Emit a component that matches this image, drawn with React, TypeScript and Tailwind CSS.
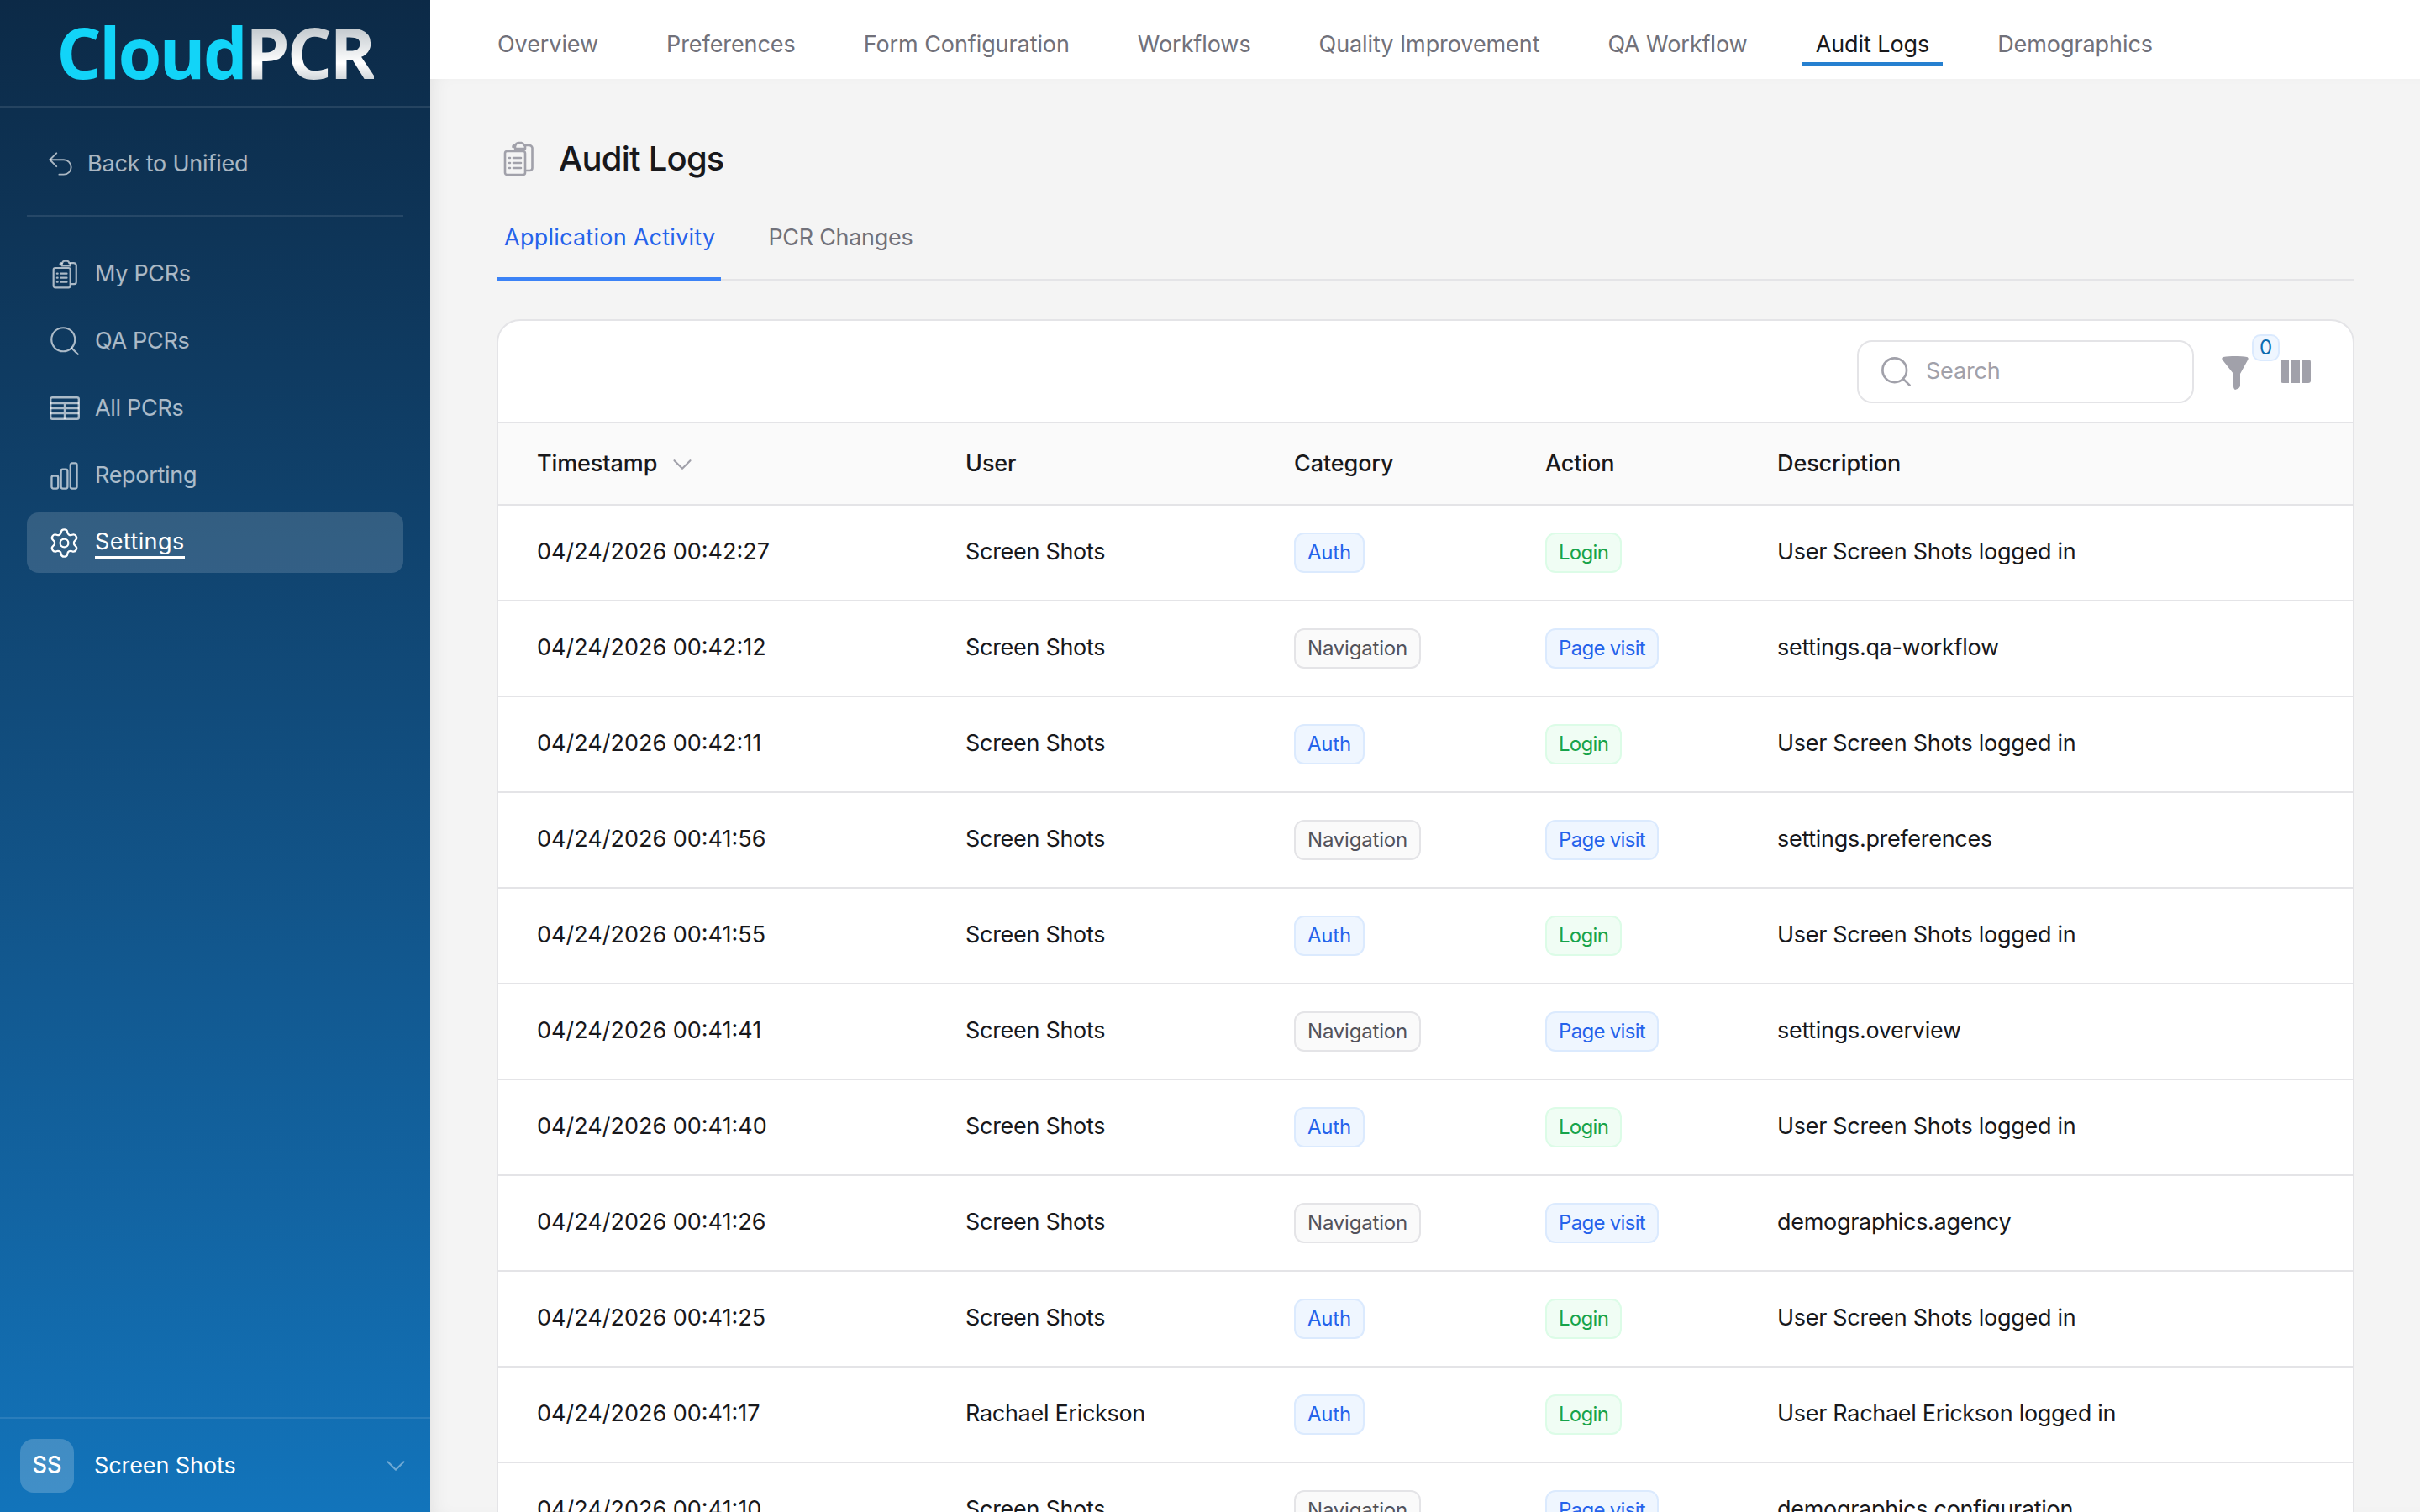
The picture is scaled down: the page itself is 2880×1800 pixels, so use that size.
import React from "react";
import { ChevronDown, Search, Undo2, Settings } from "lucide-react";

type BadgeKind = "blue" | "green" | "gray";
const badgeCls: Record<BadgeKind, string> = {
  blue: "bg-[#eff6ff] border-[#dbeafe] text-[#2563eb]",
  green: "bg-[#f0fdf4] border-[#dcfce7] text-[#16a34a]",
  gray: "bg-[#fafafa] border-[#e4e4e7] text-[#52525b]",
};

function Badge({ kind, tight, children }: { kind: BadgeKind; tight?: boolean; children: React.ReactNode }) {
  return (
    <span className={`inline-flex h-[48px] items-center rounded-[12px] border-2 px-[14px] text-[24px] ${tight ? "tracking-[-0.7px]" : "tracking-[-0.2px]"} ${badgeCls[kind]}`}>
      {children}
    </span>
  );
}

function ClipIcon({ className }: { className?: string }) {
  return (
    <svg viewBox="0 0 36 42" fill="none" stroke="currentColor" strokeWidth="2.6" strokeLinecap="round" strokeLinejoin="round" className={className}>
      <path d="M12 7h-0.5a2 2 0 0 1 2-2h1a4 4 0 0 1 3-3h4a4 4 0 0 1 3 3h6a4 4 0 0 1 4 3v24a3 3 0 0 1-3 3h-4" />
      <path d="M14 6v3h12V6" />
      <rect x="2" y="12" width="24" height="28" rx="2.5" />
      <path d="M7 20h1M12 20h9M7 26h1M12 26h9M7 32h1M12 32h9" />
    </svg>
  );
}

function TableIcon({ className }: { className?: string }) {
  return (
    <svg viewBox="0 0 36 28" fill="none" stroke="currentColor" strokeWidth="2.4" strokeLinejoin="round" className={className}>
      <rect x="1.2" y="1.2" width="33.6" height="25.6" rx="2" />
      <path d="M1 8h34M1 14h34M1 20h34M18 8v19" />
    </svg>
  );
}

function BarsIcon({ className }: { className?: string }) {
  return (
    <svg viewBox="0 0 34 34" fill="none" stroke="currentColor" strokeWidth="2.4" strokeLinejoin="round" className={className}>
      <rect x="1.5" y="17" width="8" height="15.5" rx="2" />
      <rect x="13" y="9" width="8" height="23.5" rx="2" />
      <rect x="24.5" y="1.5" width="8" height="31" rx="2" />
    </svg>
  );
}

const navItems: { label: string; icon: React.ReactNode; active?: boolean }[] = [
  { label: "My PCRs", icon: <ClipIcon className="h-[35px] w-[30px]" /> },
  { label: "QA PCRs", icon: <Search className="h-[42px] w-[42px]" strokeWidth={1.25} /> },
  { label: "All PCRs", icon: <TableIcon className="h-[28px] w-[36px]" /> },
  { label: "Reporting", icon: <BarsIcon className="h-[33px] w-[33px]" /> },
  { label: "Settings", icon: <Settings className="h-[39px] w-[39px]" strokeWidth={1.4} />, active: true },
];

const topTabs = ["Overview", "Preferences", "Form Configuration", "Workflows", "Quality Improvement", "QA Workflow", "Audit Logs", "Demographics"];

type Row = [string, string, "Auth" | "Navigation", string];
const rows: Row[] = [
  ["04/24/2026 00:42:27", "Screen Shots", "Auth", "User Screen Shots logged in"],
  ["04/24/2026 00:42:12", "Screen Shots", "Navigation", "settings.qa-workflow"],
  ["04/24/2026 00:42:11", "Screen Shots", "Auth", "User Screen Shots logged in"],
  ["04/24/2026 00:41:56", "Screen Shots", "Navigation", "settings.preferences"],
  ["04/24/2026 00:41:55", "Screen Shots", "Auth", "User Screen Shots logged in"],
  ["04/24/2026 00:41:41", "Screen Shots", "Navigation", "settings.overview"],
  ["04/24/2026 00:41:40", "Screen Shots", "Auth", "User Screen Shots logged in"],
  ["04/24/2026 00:41:26", "Screen Shots", "Navigation", "demographics.agency"],
  ["04/24/2026 00:41:25", "Screen Shots", "Auth", "User Screen Shots logged in"],
  ["04/24/2026 00:41:17", "Rachael Erickson", "Auth", "User Rachael Erickson logged in"],
  ["04/24/2026 00:41:10", "Screen Shots", "Navigation", "demographics.configuration"],
];

export default function App() {
  return (
    <div className="flex h-screen overflow-hidden bg-white text-[#18181b] font-['Inter','Liberation_Sans',sans-serif]">
      <aside className="flex w-[512px] shrink-0 flex-col bg-gradient-to-b from-[#0c2a47] to-[#1274bb]">
        <div className="flex h-[128px] items-center justify-center border-b-2 border-white/10 pb-[2px]">
          <span className="font-['Open_Sans',sans-serif] text-[84px] font-bold leading-none tracking-[-3px] text-[#12d4f8]">
            Cloud
            <span className="bg-gradient-to-b from-[#9aa5ad] via-white via-[62%] to-[#9aa5ad] bg-clip-text text-transparent">PCR</span>
          </span>
        </div>
        <div className="mx-[32px] border-b-2 border-white/10">
          <div className="flex h-[128px] items-center gap-[13px] pl-[21px] pt-[6px] text-[27px] tracking-[-0.2px] text-white/65">
            <Undo2 className="h-[38px] w-[38px]" strokeWidth={1.2} />
            Back to Unified
          </div>
        </div>
        <nav className="mx-[32px] mt-[32px] flex flex-col gap-[8px]">
          {navItems.map((it) => (
            <div
              key={it.label}
              className={`flex h-[72px] items-center rounded-[14px] text-[27px] ${it.active ? "bg-white/15 tracking-[0.4px] text-white" : "tracking-[-0.3px] text-white/65"}`}
            >
              <span className="flex w-[81px] shrink-0 justify-center pl-[8px]">{it.icon}</span>
              <span className={it.active ? "border-b-4 border-white leading-[35px]" : ""}>{it.label}</span>
            </div>
          ))}
        </nav>
        <div className="mt-auto flex h-[113px] items-center border-t-2 border-white/10 pl-[24px] pr-[22px] text-white">
          <span className="flex h-[64px] w-[64px] items-center justify-center rounded-[16px] bg-white/20 text-[27px] font-medium">SS</span>
          <span className="ml-[24px] pt-[2px] text-[27px] tracking-[-0.1px]">Screen Shots</span>
          <ChevronDown className="ml-auto h-[38px] w-[38px] text-white/40" strokeWidth={1.3} />
        </div>
      </aside>

      <div className="flex min-w-0 flex-1 flex-col">
        <header className="flex h-[94px] shrink-0 items-start gap-[49px] bg-white pl-[64px] pt-[28px]">
          {topTabs.map((t) => {
            const active = t === "Audit Logs";
            return (
              <div
                key={t}
                className={`h-[50px] border-b-4 px-[16px] text-[27px] leading-[50px] tracking-[-0.08px] ${active ? "border-[#2680d0] text-[#18181b]" : "border-transparent text-[#71717a]"}`}
              >
                {t}
              </div>
            );
          })}
        </header>

        <main className="min-h-0 flex-1 bg-[#f4f4f4] pl-[79px] pr-[78px] pt-[67px] shadow-[inset_14px_0_22px_-12px_rgba(0,0,0,0.08)]">
          <div className="flex h-[56px] items-center gap-[30px] pl-[8px]">
            <ClipIcon className="h-[42px] w-[36px] text-[#a1a1aa]" />
            <h1 className="text-[40px] font-medium tracking-[-0.8px] text-[#18181b]">Audit Logs</h1>
          </div>

          <div className="mt-[37px] flex gap-[48px] border-b-2 border-[#e4e4e7]">
            <div className="-mb-[2px] border-b-4 border-[#3b82f6] pb-[26px] pl-[9px] pr-[7px] pt-[8px] text-[27px] leading-[42px] tracking-[0.25px] text-[#2563eb]">
              Application Activity
            </div>
            <div className="px-[8px] pb-[26px] pt-[8px] text-[27px] leading-[42px] tracking-[-0.3px] text-[#71717a]">PCR Changes</div>
          </div>

          <section className="mt-[46px] overflow-hidden rounded-[28px] border-2 border-[#e4e4e7] bg-white">
            <div className="flex h-[122px] items-center justify-end border-b-2 border-[#e4e4e7] pr-[50px]">
              <div className="flex h-[75px] w-[401px] items-center gap-[14px] rounded-[18px] border-2 border-[#e4e4e7] pl-[23px] text-[27px] tracking-[-0.2px] text-[#a1a1aa]">
                <Search className="h-[43px] w-[43px]" strokeWidth={1.5} />
                Search
              </div>
              <div className="relative ml-[32px] mr-[37px] h-[36px] w-[34px]">
                <svg viewBox="0 0 32 40" className="h-[40px] w-[34px] text-[#a1a1aa]" fill="currentColor">
                  <path d="M2 1c8-1.300 20-1.300 28 0 1.500.4 2 1.500 1.400 3L22 21v14c0 2-2 4-6 5-1-.5-2-2-2-4V21L.6 4C0 2.500.5 1.400 2 1z" />
                </svg>
                <span className="absolute -top-[26px] left-[37px] flex h-[32px] w-[33px] items-center justify-center rounded-[10px] border-2 border-[#dbeafe] bg-[#eff6ff] text-[24px] text-[#0b6bb0]">0</span>
              </div>
              <svg viewBox="0 0 36 28" className="h-[28px] w-[36px] text-[#a1a1aa]" fill="currentColor">
                <path d="M3 0h7v28H3a3 3 0 0 1-3-3V3a3 3 0 0 1 3-3zM13 0h10v28H13zM26 0h7a3 3 0 0 1 3 3v22a3 3 0 0 1-3 3h-7z" />
              </svg>
            </div>

            <table className="w-full table-fixed border-collapse text-left text-[27px] tracking-[-0.3px]">
              <thead>
                <tr className="h-[97px] border-b-2 border-[#e4e4e7] bg-[#fafafa] font-medium tracking-[-0.1px]">
                  <th className="w-[508px] pl-[46px] font-medium">
                    <span className="inline-flex items-center gap-[11px]">
                      Timestamp
                      <ChevronDown className="mt-[2px] h-[38px] w-[38px] text-[#a1a1aa]" strokeWidth={1.4} />
                    </span>
                  </th>
                  <th className="w-[391px] pl-[48px] font-medium">User</th>
                  <th className="w-[299px] pl-[48px] font-medium">Category</th>
                  <th className="w-[276px] pl-[48px] font-medium">Action</th>
                  <th className="pl-[48px] font-medium">Description</th>
                </tr>
              </thead>
              <tbody>
                {rows.map((r) => {
                  const auth = r[2] === "Auth";
                  return (
                    <tr key={r[0]} className="h-[114px] border-b-2 border-[#e4e4e7]">
                      <td className="pb-[2px] pl-[46px] tracking-[0px]">{r[0]}</td>
                      <td className="pb-[2px] pl-[48px]">{r[1]}</td>
                      <td className="pl-[48px]">
                        <Badge kind={auth ? "blue" : "gray"}>{r[2]}</Badge>
                      </td>
                      <td className="pl-[48px]">
                        <Badge kind={auth ? "green" : "blue"} tight>{auth ? "Login" : "Page visit"}</Badge>
                      </td>
                      <td className="pb-[2px] pl-[48px]">{r[3]}</td>
                    </tr>
                  );
                })}
              </tbody>
            </table>
          </section>
        </main>
      </div>
    </div>
  );
}
